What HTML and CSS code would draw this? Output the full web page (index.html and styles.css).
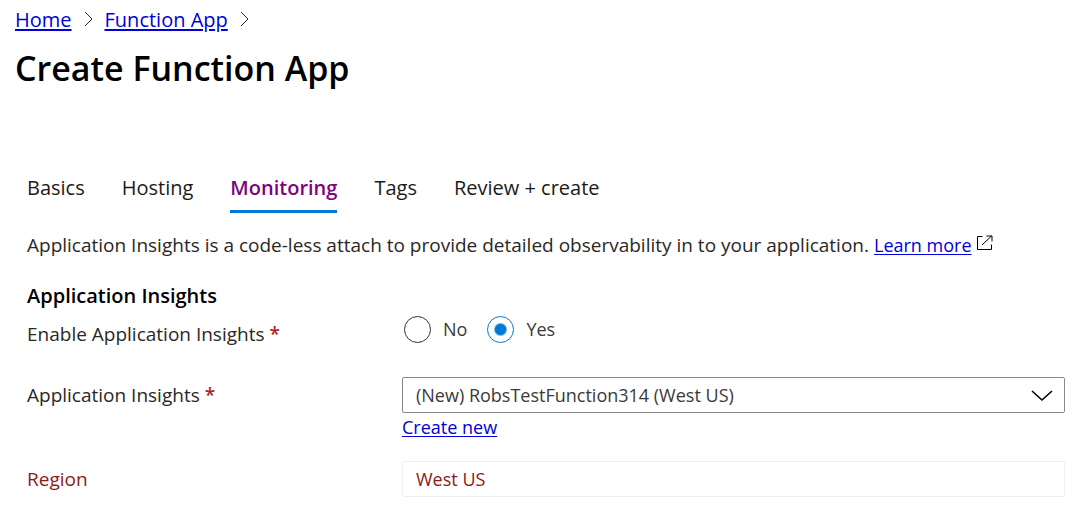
FILE: index.html
```html
<!DOCTYPE html>
<html lang="en">
<head>
<meta charset="utf-8">
<meta name="viewport" content="width=device-width, initial-scale=1">
<title>Create Function App</title>
<link rel="stylesheet" href="styles.css">
</head>
<body>
<header class="header">
  <nav class="breadcrumb" aria-label="Breadcrumb">
    <a href="#">Home</a>
    <svg class="crumb-sep" viewBox="0 0 9 16" aria-hidden="true"><path d="M1 1l7 7-7 7"/></svg>
    <a href="#">Function App</a>
    <svg class="crumb-sep" viewBox="0 0 9 16" aria-hidden="true"><path d="M1 1l7 7-7 7"/></svg>
  </nav>
  <h1 class="title">Create Function App</h1>
</header>
<main class="content">
  <nav class="tabs" aria-label="Steps">
    <button class="tab" type="button">Basics</button>
    <button class="tab" type="button">Hosting</button>
    <button class="tab tab-active" type="button" aria-current="step">Monitoring</button>
    <button class="tab" type="button">Tags</button>
    <button class="tab" type="button">Review + create</button>
  </nav>
  <p class="intro">
    <span class="intro-text">Application Insights is a code-less attach to provide detailed observability in to your application.</span>
    <a class="learn" href="#">Learn more</a>
    <svg class="external" viewBox="0 0 16 16" aria-hidden="true"><path d="M5.500 1.500h-5v13h14v-5M5 10L14.500 1M9.500 1h5.500v5.500"/></svg>
  </p>
  <form class="form">
    <h2 class="section">Application Insights</h2>
    <div class="row row-radio" role="radiogroup" aria-labelledby="enable-label">
      <span class="label" id="enable-label">Enable Application Insights <span class="required">*</span></span>
      <div class="options">
        <label class="option"><input class="radio" type="radio" name="enable">No</label>
        <label class="option"><input class="radio" type="radio" name="enable" checked>Yes</label>
      </div>
    </div>
    <div class="row row-insights">
      <label class="label" for="insights">Application Insights <span class="required">*</span></label>
      <div class="select-wrap">
        <select class="field select" id="insights"><option>(New) RobsTestFunction314 (West US)</option></select>
        <svg class="chevron" viewBox="0 0 22 12" aria-hidden="true"><path d="M1 1l10 9 10-9"/></svg>
      </div>
      <a class="create" href="#">Create new</a>
    </div>
    <div class="row row-region">
      <label class="label" for="region">Region</label>
      <input class="field region" id="region" type="text" value="West US" readonly>
    </div>
  </form>
</main>
</body>
</html>
```
FILE: styles.css
```css
* {
  box-sizing: border-box;
}

body {
  margin: 0;
  background: #fff;
  color: #292827;
  font: 18px/24px "Segoe UI", "Open Sans", "Noto Sans", sans-serif;
}

a {
  color: #0000d8;
  text-decoration-thickness: 1px;
  text-underline-offset: 2px;
}

svg {
  flex: none;
  fill: none;
  stroke: #292827;
}

.header {
  padding: 8px 15px 0;
}

.breadcrumb {
  display: flex;
  align-items: center;
  gap: 12px;
  font-size: 20px;
}

.breadcrumb a {
  text-decoration-thickness: 2px;
}

.crumb-sep {
  width: 9px;
  height: 16px;
  margin-bottom: 2px;
}

.title {
  margin: 12px 0 0;
  color: #000;
  font-size: 34px;
  font-weight: 600;
  line-height: 48px;
}

.content {
  padding: 80px 19px 16px 27px;
}

.tabs {
  display: flex;
  gap: 37px;
}

.tab {
  padding: 4px 0 10px;
  border: 0;
  border-bottom: 3px solid transparent;
  background: none;
  color: #1b1a19;
  font: inherit;
  font-size: 20px;
  white-space: nowrap;
}

.tab-active {
  border-color: #0078d4;
  color: #800080;
  font-weight: 600;
}

.intro {
  display: flex;
  align-items: center;
  margin: 20px 0 0;
}

.intro-text {
  font-size: 19px;
}

.learn {
  margin: 0 5px;
}

.external {
  width: 16px;
  height: 16px;
  margin-bottom: 4px;
  stroke: #000;
}

.section {
  margin: 27px 0 0;
  color: #000;
  font-size: 20px;
  font-weight: 600;
  line-height: 24px;
}

.row {
  display: grid;
  grid-template-columns: 375px 1fr;
}

.label {
  font-size: 19px;
}

.row-radio {
  margin-top: 7px;
}

.row-radio .label {
  padding-top: 7px;
}

.row-insights {
  margin-top: 31px;
  align-items: center;
}

.row-region {
  margin-top: 22px;
  align-items: center;
}

.required {
  color: #a4262c;
  font-weight: 600;
}

.options {
  display: flex;
  gap: 20px;
  padding-left: 2px;
  color: #3b3a39;
}

.option {
  display: flex;
  align-items: center;
  gap: 12px;
  height: 28px;
}

.radio {
  appearance: none;
  width: 27px;
  height: 27px;
  margin: 0;
  border: 1px solid #323130;
  border-radius: 50%;
}

.radio:checked {
  border-color: #0078d4;
  background: radial-gradient(circle, #0078d4 5px, transparent 7px);
}

.field {
  width: 100%;
  height: 36px;
  padding: 0 13px;
  border: 1px solid #8a8886;
  border-radius: 2px;
  background: #fff;
  color: #3b3a39;
  font: inherit;
}

.select-wrap {
  position: relative;
}

.select {
  display: block;
  appearance: none;
}

.chevron {
  position: absolute;
  top: 13px;
  right: 12px;
  width: 22px;
  height: 12px;
  stroke: #000;
  stroke-width: 1.6;
  pointer-events: none;
}

.create {
  grid-column: 2;
  justify-self: start;
  margin-top: 2px;
}

.region {
  border-color: #f0efee;
}

.row-region .label,
.region {
  color: #8b1a1a;
}
```
